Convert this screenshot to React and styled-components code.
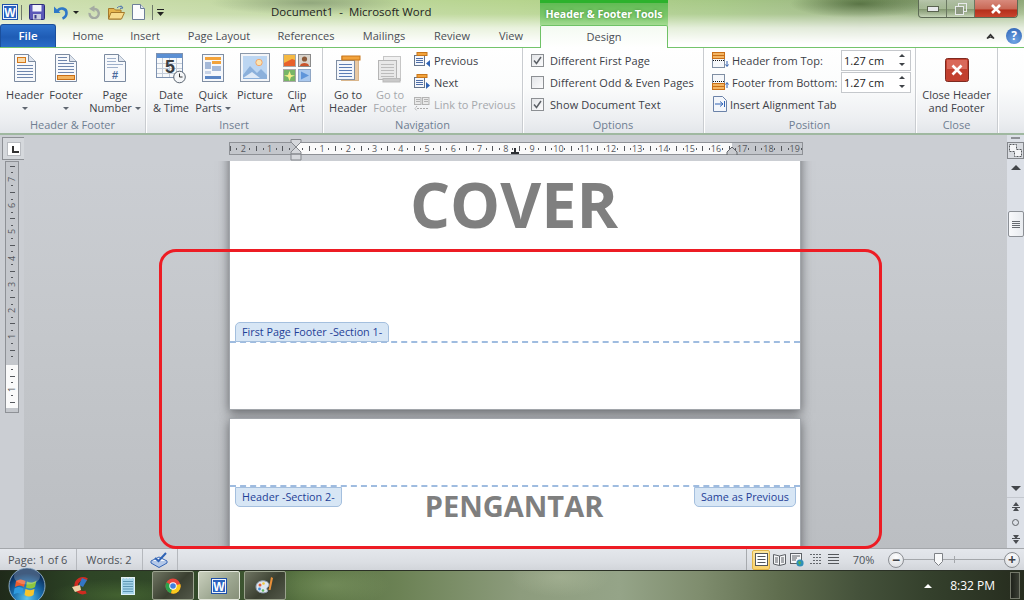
import React from 'react';
import styled, { createGlobalStyle } from 'styled-components';

const UI_FONT = `"Open Sans", "Noto Sans", sans-serif`;

const GlobalStyle = createGlobalStyle`
  html, body { margin: 0; padding: 0; background: #000; }
  * { box-sizing: border-box; }
`;

/* ---------- icons ---------- */

const PageBase = ({ children }) => (
  <svg width="24" height="30" viewBox="0 0 24 30">
    <path d="M1.5 1.5H15.5L22.5 8.5V28.5H1.5Z" fill="#f7f9fc" stroke="#7b8aa0" />
    <path d="M15.5 1.5V8.5H22.5" fill="#dfe5ee" stroke="#7b8aa0" />
    {children}
  </svg>
);

const HeaderIcon = () => (
  <PageBase>
    <rect x="4.5" y="4.5" width="8" height="5" fill="#f8d9a8" stroke="#d5781a" />
    <path d="M4 12.5H20M4 15.5H20M4 18.5H20M4 21.5H20M4 24.5H20" stroke="#6f86ad" />
  </PageBase>
);

const FooterIcon = () => (
  <PageBase>
    <path d="M4 4.5H13M4 7.5H13M4 10.5H20M4 13.5H20M4 16.5H20M4 19.5H20" stroke="#6f86ad" />
    <rect x="3.5" y="22.5" width="17" height="4" fill="#f3b562" stroke="#c96f17" />
  </PageBase>
);

const PageNumberIcon = () => (
  <PageBase>
    <path d="M4 5.5H13M4 8.5H13M4 11.5H20M4 14.5H15" stroke="#9fb0ca" />
    <text x="12" y="26" fontSize="11" fontWeight="700" textAnchor="middle" fill="#4a6a9c" fontFamily="Liberation Sans">#</text>
  </PageBase>
);

const DateTimeIcon = () => (
  <svg width="30" height="31" viewBox="0 0 30 31">
    <rect x="0.5" y="0.5" width="26" height="24" fill="#f7f9fb" stroke="#7e92b0" />
    <rect x="1" y="1" width="25" height="4" fill="#5b8fd3" />
    <path d="M1 10.5H26M1 15.5H26M1 20.5H26M6.5 5V24M13.5 5V24M20.5 5V24" stroke="#c3ccd8" />
    <text x="14" y="20" fontSize="18" fontWeight="700" textAnchor="middle" fill="#3b3f44" fontFamily="Liberation Sans">5</text>
    <circle cx="23.5" cy="24" r="5.8" fill="#f4f6f8" stroke="#59636f" />
    <path d="M23.5 20.5V24H26.5" fill="none" stroke="#333" />
  </svg>
);

const QuickPartsIcon = () => (
  <svg width="24" height="30" viewBox="0 0 24 30">
    <rect x="1.5" y="1.5" width="21" height="27" fill="#f6f8fb" stroke="#7f8ea3" />
    <rect x="4" y="4" width="16" height="3" fill="#f3a33a" />
    <rect x="11" y="8" width="9" height="3" fill="#f3a33a" />
    <rect x="4" y="9" width="6" height="7" fill="#a5b9d8" />
    <rect x="11" y="13" width="9" height="5" fill="#a5b9d8" />
    <rect x="4" y="18" width="6" height="3" fill="#c7d3e6" />
    <rect x="4" y="23" width="16" height="3" fill="#5a85c4" />
  </svg>
);

const PictureIcon = () => (
  <svg width="30" height="30" viewBox="0 0 30 30">
    <rect x="0.5" y="0.5" width="29" height="28" fill="#f3f5f8" stroke="#8b98aa" />
    <rect x="3" y="3" width="24" height="23" fill="#bcd6f2" />
    <circle cx="19" cy="9.5" r="3.2" fill="#fbe3b0" stroke="#f2a66a" />
    <path d="M3 22L10 13L17 20L21 16L27 22V26H3Z" fill="#8bb0db" />
    <path d="M3 25L12 19L20 25Z" fill="#dfeaf7" />
  </svg>
);

const ClipArtIcon = () => (
  <svg width="28" height="28" viewBox="0 0 28 28">
    <rect x="0.5" y="0.5" width="12" height="12" fill="#f5b942" stroke="#a9a9a9" />
    <path d="M1 9L9 5L12 6V12H1Z" fill="#e8622c" />
    <rect x="15.5" y="0.5" width="12" height="12" fill="#d9d4cc" stroke="#8a8a8a" />
    <circle cx="21.5" cy="5" r="2.6" fill="#8c5a3a" />
    <path d="M17 12C17 8 26 8 26 12Z" fill="#c9542c" />
    <rect x="0.5" y="15.5" width="12" height="12" fill="#77b567" stroke="#a9a9a9" />
    <path d="M6.5 17L8 21L12 21.5L8 23L6.5 27L5 23L1 21.5L5 21Z" fill="#f4ef8a" />
    <rect x="15.5" y="15.5" width="12" height="12" fill="#a9c8ee" stroke="#8fa6c4" />
    <path d="M18 17.5L26 21.5L18 25.5Z" fill="#5f95da" />
  </svg>
);

const GoToIcon = ({ $grey, $footer }) => {
  const line = $grey ? '#bcbcbc' : '#5c7db4';
  const fill = $grey ? '#e8e8e8' : '#f3f6fb';
  const edge = $grey ? '#b5b5b5' : '#7f8ea3';
  const orange = $grey ? '#c9c9c9' : '#f2a33c';
  return (
    <svg width="26" height="28" viewBox="0 0 26 28">
      <rect x="6.5" y="1.5" width="17" height="24" fill={$grey ? '#f0f0f0' : '#e9c9a3'} stroke={$grey ? '#c6c6c6' : '#d9b68c'} />
      <rect x="1.5" y="5.5" width="18" height="19" fill={fill} stroke={edge} />
      <path d="M4 9.5H17M4 12.5H17M4 15.5H17M4 18.5H17M4 21.5H17" stroke={line} />
      {$footer ? (
        <rect x="6" y="23.5" width="17" height="3.5" fill={orange} stroke="#b9b9b9" />
      ) : (
        <rect x="7" y="1" width="18" height="4" fill={orange} stroke="#c8761a" />
      )}
    </svg>
  );
};

const NavIcon = ({ $next }) => (
  <svg width="16" height="16" viewBox="0 0 16 16">
    <rect x="0.5" y="3.5" width="10" height="10" fill="#f3f6fb" stroke="#64748c" />
    <path d="M2 6.5H9M2 8.5H9M2 10.5H9" stroke="#4f6fa8" />
    <rect x="3" y="0.5" width="10" height="3" fill="#f2a33c" stroke="#c8761a" />
    {$next ? <path d="M12 8L16 11.5L12 15Z" fill="#2f63b5" /> : <path d="M16 8L12 11.5L16 15Z" fill="#2f63b5" />}
  </svg>
);

const LinkIcon = () => (
  <svg width="16" height="16" viewBox="0 0 16 16">
    <rect x="0.5" y="1.5" width="6.5" height="7" fill="#e9e9e9" stroke="#b3b3b3" />
    <rect x="8.5" y="1.5" width="6.5" height="7" fill="#e9e9e9" stroke="#b3b3b3" />
    <path d="M2 3.5H6M2 5.5H6M10 3.5H14M10 5.5H14" stroke="#b3b3b3" />
    <path d="M3 12.5H14M3 10L1 12.5L3 15" fill="none" stroke="#aaa" strokeDasharray="2 1" />
  </svg>
);

const HeaderTopIcon = () => (
  <svg width="17" height="16" viewBox="0 0 17 16">
    <rect x="0.5" y="0.5" width="12" height="15" fill="#f5f7fa" stroke="#7f8ea3" />
    <rect x="0.5" y="0.5" width="12" height="6" fill="#f3b562" stroke="#c96f17" />
    <path d="M1 3.5H12" stroke="#c96f17" />
    <path d="M1 8.5H12" stroke="#111" strokeDasharray="1 1" />
    <path d="M15 9V14M13.5 12.5L15 14.5L16.5 12.5" fill="none" stroke="#2f5fae" />
  </svg>
);

const FooterBottomIcon = () => (
  <svg width="17" height="16" viewBox="0 0 17 16">
    <rect x="0.5" y="0.5" width="12" height="15" fill="#f5f7fa" stroke="#7f8ea3" />
    <rect x="0.5" y="9.5" width="12" height="6" fill="#f3b562" stroke="#c96f17" />
    <path d="M1 12.5H12" stroke="#c96f17" />
    <path d="M1 7.5H12" stroke="#111" strokeDasharray="1 1" />
    <path d="M15 14V9M13.5 10.5L15 8.5L16.5 10.5" fill="none" stroke="#2f5fae" />
  </svg>
);

const AlignTabIcon = () => (
  <svg width="14" height="16" viewBox="0 0 14 16">
    <path d="M0.5 0.5H9.5L13.5 4.5V15.5H0.5Z" fill="#f3f6fb" stroke="#6b82a8" />
    <path d="M2 8H9M7 5.5L10 8L7 10.5M11.5 5V11" fill="none" stroke="#2f63b5" />
  </svg>
);

const CloseBigIcon = () => (
  <svg width="24" height="24" viewBox="0 0 24 24">
    <rect x="0.5" y="0.5" width="23" height="23" rx="2" fill="#c2402f" stroke="#7e2a20" />
    <rect x="2" y="2" width="20" height="9" fill="#d9695a" />
    <path d="M7.5 7.5L16.5 16.5M16.5 7.5L7.5 16.5" stroke="#fff" strokeWidth="2.6" />
  </svg>
);

const WordLogo = ({ size = 16 }) => (
  <svg width={size} height={size} viewBox="0 0 16 16">
    <rect x="0.5" y="0.5" width="15" height="15" fill="#eef3fb" stroke="#1d4fa8" />
    <rect x="2" y="2" width="12" height="12" fill="#2a62bf" />
    <text x="8" y="12.5" fontSize="12" fontWeight="700" textAnchor="middle" fill="#fff" fontFamily="Liberation Sans">W</text>
  </svg>
);

const SaveIcon = () => (
  <svg width="16" height="16" viewBox="0 0 16 16">
    <rect x="0.5" y="0.5" width="15" height="15" rx="1" fill="#5a58b8" stroke="#2d2c78" />
    <rect x="3.5" y="1" width="9" height="6.5" fill="#f2f4fb" />
    <rect x="4" y="10" width="8" height="5.5" fill="#c9cde0" />
    <rect x="5.5" y="11" width="2" height="3.5" fill="#3a3a8a" />
  </svg>
);

const UndoIcon = () => (
  <svg width="16" height="16" viewBox="0 0 16 16">
    <path d="M4.5 7C7 3 13.5 4 13.5 9C13.5 11.5 12 13.5 9.5 14.5" fill="none" stroke="#2e78c8" strokeWidth="2.6" />
    <path d="M1 2.5V9H7.5Z" fill="#2e78c8" />
  </svg>
);

const RedoIcon = () => (
  <svg width="14" height="14" viewBox="0 0 14 14">
    <path d="M5.5 4.2A4.6 4.6 0 1 1 2.6 8" fill="none" stroke="#a4aaa2" strokeWidth="2.4" />
    <path d="M7.5 0.5V7L2 3.7Z" fill="#a4aaa2" />
  </svg>
);

const OpenIcon = () => (
  <svg width="17" height="15" viewBox="0 0 17 15">
    <path d="M0.5 3.5H6L7.5 5H13V14H0.5Z" fill="#e6b54c" stroke="#a5792b" />
    <path d="M3 7.5H16.5L13.5 14H0.5Z" fill="#f8dc8c" stroke="#a5792b" />
    <path d="M9 3C10.5 1 13 1 14.5 2.5M13 0.5L15 3L12 3.5" fill="none" stroke="#557ab0" />
  </svg>
);

const NewIcon = () => (
  <svg width="13" height="16" viewBox="0 0 13 16">
    <path d="M0.5 0.5H8.5L12.5 4.5V15.5H0.5Z" fill="#fbfcfd" stroke="#6d7f98" />
    <path d="M8.5 0.5V4.5H12.5" fill="#dfe5ee" stroke="#6d7f98" />
  </svg>
);

const CustomizeIcon = () => (
  <svg width="8" height="9" viewBox="0 0 8 9">
    <path d="M0 1.5H7" stroke="#222" />
    <path d="M0 4H7L3.5 8Z" fill="#222" />
  </svg>
);

const ProofIcon = () => (
  <svg width="18" height="16" viewBox="0 0 18 16">
    <path d="M1 9L9 5L17 9L9 14Z" fill="#f6f8fb" stroke="#3565b5" />
    <path d="M1 9V11L9 15.5L17 11V9" fill="#b4c8e8" stroke="#3565b5" />
    <path d="M5 6L8.5 9L16 1" fill="none" stroke="#2f63b5" strokeWidth="2" />
  </svg>
);

const ViewIcon = ({ $kind }) => {
  if ($kind === 'print') {
    return (
      <svg width="13" height="13" viewBox="0 0 13 13">
        <rect x="0.5" y="0.5" width="12" height="12" fill="#fff" stroke="#55585c" />
        <path d="M2.5 3.5H10.5M2.5 6.5H10.5M2.5 9.5H10.5" stroke="#55585c" />
      </svg>
    );
  }
  if ($kind === 'read') {
    return (
      <svg width="13" height="14" viewBox="0 0 13 14">
        <path d="M0.5 1.5L6.5 3L12.5 1.5V11L6.5 12.5L0.5 11Z" fill="#f4f5f7" stroke="#5d6166" />
        <path d="M6.5 3V12.5M2 5H5M2 7H5M2 9H5M8 5H11M8 7H11M8 9H11" stroke="#5d6166" />
      </svg>
    );
  }
  if ($kind === 'web') {
    return (
      <svg width="14" height="14" viewBox="0 0 14 14">
        <rect x="0.5" y="0.5" width="11" height="10" fill="#f4f5f7" stroke="#5d6166" />
        <path d="M2 3H10M2 5H7M2 7H6" stroke="#5d6166" />
        <circle cx="10" cy="10" r="3.6" fill="#2e8fb8" />
        <path d="M8 9L10 8L11 10L9.5 12Z" fill="#58b04a" />
      </svg>
    );
  }
  if ($kind === 'outline') {
    return (
      <svg width="13" height="13" viewBox="0 0 13 13">
        <path d="M1 1.5H12M4 4.5H12M4 7.5H12M1 10.5H12" stroke="#63676c" strokeDasharray="2 1" />
      </svg>
    );
  }
  return (
    <svg width="13" height="13" viewBox="0 0 13 13">
      <path d="M1 1.5H12M1 4.5H12M1 7.5H12M1 10.5H12" stroke="#55585c" />
    </svg>
  );
};

const OrbIcon = () => (
  <svg width="38" height="38" viewBox="0 0 38 38">
    <defs>
      <radialGradient id="orbFill" cx="50%" cy="85%" r="70%">
        <stop offset="0" stopColor="#5fc6ee" />
        <stop offset="0.55" stopColor="#1a6fb0" />
        <stop offset="1" stopColor="#0c2f5c" />
      </radialGradient>
    </defs>
    <circle cx="19" cy="19" r="18" fill="url(#orbFill)" stroke="#a8c4dc" strokeOpacity="0.8" />
    <path d="M8 14C11 12 14 12 17.5 14L16 20C13 18 10 18 7 20Z" fill="#ee5c2c" />
    <path d="M19 14.5C22 16 25 16 28.5 13.5L27 20C24 22 21 22 18 20.5Z" fill="#8cc63f" />
    <path d="M6.5 21.5C10 19.5 12.5 19.5 15.5 21.5L14 27.5C11 25.5 8.5 25.5 5.5 27.5Z" fill="#2f9be0" />
    <path d="M17.5 22C20.5 23.5 23.5 23.5 26.5 22L25.5 28C22.5 30 19.5 30 16.5 28Z" fill="#f8c52c" />
    <ellipse cx="19" cy="9.5" rx="13" ry="8" fill="#fff" opacity="0.22" />
  </svg>
);

const CleanerIcon = () => (
  <svg width="20" height="18" viewBox="0 0 20 18">
    <path d="M16 3C11 0 5 3 5 9C5 14 10 17 15 15" fill="none" stroke="#cf2b20" strokeWidth="3.4" />
    <path d="M11 1L8 8L12 10L16 3Z" fill="#3476c4" />
    <path d="M1 10L9 8L10 13L4 15Z" fill="#eed3a8" />
  </svg>
);

const NotepadIcon = () => (
  <svg width="16" height="20" viewBox="0 0 16 20">
    <rect x="1.5" y="1.5" width="13" height="17" fill="#a5d4ea" stroke="#dff1f8" />
    <path d="M3 5.5H13M3 8H13M3 10.5H13M3 13H13M3 15.5H13" stroke="#5d96b3" />
    <path d="M2 1V3M5 1V3M8 1V3M11 1V3M14 1V3" stroke="#eee" />
  </svg>
);

const ChromeIcon = () => (
  <svg width="16" height="16" viewBox="0 0 16 16">
    <circle cx="8" cy="8" r="7.5" fill="#e8453c" />
    <path d="M8 8L1.5 4.3A7.5 7.5 0 0 0 6 15.3Z" fill="#2ba24c" />
    <path d="M8 8L15.3 6A7.5 7.5 0 0 1 6 15.3Z" fill="#f8c91c" />
    <circle cx="8" cy="8" r="3.7" fill="#fff" />
    <circle cx="8" cy="8" r="2.8" fill="#3f7fe0" />
  </svg>
);

const PaletteIcon = () => (
  <svg width="20" height="20" viewBox="0 0 20 20">
    <path d="M1 11C1 6 6 4 10 5C14 6 15 9 13 11C11 12 12 14 13 15C11 18 1 18 1 11Z" fill="#dfe6ee" stroke="#8fa0b2" />
    <circle cx="5" cy="9" r="1.5" fill="#e25a3a" />
    <circle cx="8.5" cy="7.5" r="1.3" fill="#f2c63a" />
    <circle cx="4.5" cy="13" r="1.4" fill="#3f8fd8" />
    <circle cx="8" cy="14.5" r="1.3" fill="#5fb55a" />
    <path d="M16 1L18 2L15.5 14H13.5Z" fill="#e8903a" />
  </svg>
);

/* ---------- title bar and tabs ---------- */

const Screen = styled.div`
  position: relative;
  display: flex;
  flex-direction: column;
  width: 1024px;
  height: 600px;
  overflow: hidden;
  font-family: ${UI_FONT};
  font-size: 11px;
  color: #3c4046;
`;

const Chrome = styled.div`
  background:
    linear-gradient(180deg, rgba(255, 255, 255, 0) 0, rgba(255, 255, 255, 0.12) 14px, rgba(255, 255, 255, 0.7) 28px, #fff 44px),
    radial-gradient(70px 14px at 860px 4px, #54703f 0, rgba(84, 112, 63, 0) 100%),
    radial-gradient(110px 20px at 960px 0, #6f8a5a 0, rgba(111, 138, 90, 0) 100%),
    radial-gradient(100px 12px at 310px 3px, #8fa57a 0, rgba(143, 165, 122, 0) 100%),
    linear-gradient(90deg, #cfe0b0 0, #c2d8a2 240px, #b6d48e 520px, #a6c886 720px, #9cb583 860px, #a9c191 1024px);
`;

const TitleRow = styled.div`
  display: flex;
  height: 25px;
`;

const Qat = styled.div`
  display: flex;
  align-items: center;
  width: 271px;
  padding: 0 0 1px 2px;
`;

const QatSep = styled.span`
  width: 1px;
  height: 15px;
  margin: 0 ${(p) => p.$right}px 0 ${(p) => p.$left}px;
  background: #6f7a6a;
`;

const QatItem = styled.span`
  display: flex;
  margin-right: ${(p) => p.$gap}px;
`;

const TinyCaret = styled.span`
  width: 0;
  height: 0;
  margin-right: ${(p) => p.$gap || 0}px;
  border-left: 3px solid transparent;
  border-right: 3px solid transparent;
  border-top: 3px solid ${(p) => p.$color || '#222'};
`;

const DocTitle = styled.div`
  width: 269px;
  line-height: 24px;
  font-size: 11.45px;
  color: #1e1e1e;
  white-space: pre;
`;

const ContextTitle = styled.div`
  width: 128px;
  height: 25px;
  border-top: 3px solid #2cb22c;
  background: linear-gradient(180deg, #62bb55 0, #7cc76b 60%, #a4dc92 100%);
  font-size: 10.6px;
  font-weight: 700;
  line-height: 22px;
  text-align: center;
  color: #fff;
  text-shadow: 0 0 3px #3d8a33;
`;

const WindowButtons = styled.div`
  display: flex;
  width: 100px;
  height: 18px;
  margin-left: 250px;
  border: 1px solid #5d6a55;
  border-top: 0;
  border-radius: 0 0 4px 4px;
  overflow: hidden;
`;

const WindowButton = styled.div`
  display: flex;
  align-items: center;
  justify-content: center;
  width: ${(p) => p.$w}px;
  border-right: ${(p) => (p.$close ? 'none' : '1px solid #6b7862')};
  background: ${(p) =>
    p.$close
      ? 'linear-gradient(180deg, #d88a7c 0, #c96a58 50%, #b5301c 60%, #c9452f 100%)'
      : 'linear-gradient(180deg, rgba(255,255,255,.45) 0, rgba(255,255,255,.2) 50%, rgba(90,100,80,.25) 55%, rgba(255,255,255,.25) 100%)'};
`;

const TabRow = styled.div`
  display: flex;
  height: 22px;
`;

const FileTab = styled.div`
  width: 56px;
  height: 23px;
  margin: -1px 4px 0 0;
  border: 1px solid #1b4f9c;
  border-bottom: 0;
  border-radius: 3px 3px 0 0;
  background: linear-gradient(180deg, #2e73cd 0, #1f5cb5 55%, #2a6cc8 100%);
  color: #fff;
  font-size: 11.5px;
  font-weight: 600;
  line-height: 22px;
  text-align: center;
`;

const Tab = styled.div`
  width: ${(p) => p.$w}px;
  font-size: 11px;
  line-height: 22px;
  text-align: center;
  color: #4a4e55;
`;

const DesignTab = styled.div`
  width: 128px;
  height: 23px;
  margin-left: 2px;
  border: 1px solid #6fc266;
  border-bottom: 0;
  border-radius: 2px 2px 0 0;
  background: linear-gradient(180deg, #f4fbf2 0, #fff 100%);
  font-size: 11px;
  line-height: 21px;
  text-align: center;
  color: #4a4e55;
  z-index: 1;
`;

const TabTools = styled.div`
  display: flex;
  align-items: center;
  gap: 11px;
  margin-left: auto;
  padding-right: 2px;
`;

const HelpDot = styled.div`
  width: 16px;
  height: 16px;
  border-radius: 50%;
  background: radial-gradient(circle at 50% 80%, #6fa4e4, #2d62b4);
  color: #fff;
  font-size: 12px;
  font-weight: 700;
  line-height: 16px;
  text-align: center;
`;

/* ---------- ribbon ---------- */

const Ribbon = styled.div`
  display: flex;
  height: 88px;
  border-top: 1px solid #74c46c;
  border-bottom: 2px solid #9fb8a0;
  background: linear-gradient(180deg, #fff 0, #fbfcfc 45%, #eceef1 85%, #e3e6ea 100%);
`;

const Group = styled.section`
  display: flex;
  flex-direction: column;
  width: ${(p) => p.$w}px;
  border-right: 1px solid #c9ccd0;
  box-shadow: 1px 0 0 #fff;
`;

const GroupBody = styled.div`
  flex: 1;
  display: flex;
  gap: ${(p) => p.$gap || 0}px;
  padding: ${(p) => p.$top || 0}px 0 0 ${(p) => p.$left || 0}px;
`;

const GroupLabel = styled.div`
  height: 17px;
  font-size: 11px;
  line-height: 18px;
  text-align: center;
  color: #6f7e92;
`;

const LargeButton = styled.div`
  display: flex;
  flex-direction: column;
  align-items: center;
  width: ${(p) => p.$w}px;
  padding-top: 4px;
  color: ${(p) => (p.$disabled ? '#a5a8ac' : '#3c4046')};
`;

const LargeIcon = styled.div`
  display: flex;
  justify-content: center;
  align-items: flex-start;
  height: 36px;
  padding-top: ${(p) => p.$top || 1}px;
`;

const LargeLabel = styled.div`
  font-size: 11px;
  line-height: 13px;
  text-align: center;
  white-space: nowrap;
`;

const LabelCaret = styled.span`
  display: inline-block;
  width: 0;
  height: 0;
  margin-left: ${(p) => (p.$inline ? 3 : 0)}px;
  vertical-align: 2px;
  border-left: 3px solid transparent;
  border-right: 3px solid transparent;
  border-top: 3px solid #5f6670;
`;

const SmallStack = styled.div`
  display: flex;
  flex-direction: column;
  padding-top: 1px;
`;

const SmallRow = styled.div`
  display: flex;
  align-items: center;
  gap: ${(p) => p.$gap || 4}px;
  height: 22px;
  padding-left: ${(p) => p.$indent || 0}px;
  white-space: nowrap;
  letter-spacing: ${(p) => p.$spacing || 0}px;
  color: ${(p) => (p.$disabled ? '#a5a8ac' : '#3c4046')};
`;

const CheckBox = styled.span`
  display: flex;
  align-items: center;
  justify-content: center;
  width: 13px;
  height: 13px;
  border: 1px solid #8c8f93;
  background: linear-gradient(135deg, #e3e5e8, #fbfbfc);
`;

const PositionLabel = styled.span`
  width: ${(p) => p.$w}px;
`;

const SpinBox = styled.div`
  display: flex;
  align-items: center;
  justify-content: space-between;
  width: 70px;
  height: 21px;
  padding: 0 5px 0 2px;
  border: 1px solid #c5c8cc;
  background: #fff;
  color: #222;
  font-size: 11px;
`;

const SpinArrows = styled.span`
  display: flex;
  flex-direction: column;
  gap: 6px;
`;

const SpinArrow = styled.span`
  width: 0;
  height: 0;
  border-left: 3px solid transparent;
  border-right: 3px solid transparent;
  border-${(p) => (p.$up ? 'bottom' : 'top')}: 3px solid #3e4247;
`;

/* ---------- workspace ---------- */

const Workspace = styled.div`
  flex: 1;
  display: grid;
  grid-template-columns: 24px 983px 17px;
  grid-template-rows: minmax(0, 1fr);
  min-height: 0;
`;

const LeftColumn = styled.div`
  display: flex;
  flex-direction: column;
  align-items: flex-start;
  background: #cbced3;
`;

const TabStopButton = styled.div`
  display: flex;
  align-items: center;
  justify-content: center;
  width: 23px;
  height: 23px;
  margin: 2px 0 1px 2px;
  border: 1px solid #8d9095;
  background: #d5d8dc;
`;

const TabStopInner = styled.div`
  position: relative;
  width: 14px;
  height: 14px;
  border: 1px solid #b8bbc0;
  background: #fff;
  &::after {
    content: '';
    position: absolute;
    left: 4px;
    top: 3px;
    width: 5px;
    height: 5px;
    border-left: 2px solid #333;
    border-bottom: 2px solid #333;
  }
`;

const VerticalRuler = styled.div`
  display: flex;
  flex-direction: column;
  align-items: center;
  width: 14px;
  height: 252px;
  margin-left: 5px;
  padding-top: 1px;
  overflow: hidden;
  border: 1px solid #8e9196;
  background: linear-gradient(180deg, #c4c7cc 0, #c4c7cc 203px, #fafafa 203px, #fafafa 246px, #c4c7cc 246px);
`;

const VMark = styled.div`
  flex: none;
  display: flex;
  align-items: center;
  justify-content: center;
  width: 100%;
  height: 6.5625px;
  color: #55585d;
  font-size: 9px;
`;

const VNumber = styled.span`
  transform: rotate(-90deg);
`;

const VTick = styled.span`
  width: ${(p) => p.$w}px;
  height: 1px;
  background: #55585d;
`;

const CenterColumn = styled.div`
  display: flex;
  flex-direction: column;
  min-width: 0;
  min-height: 0;
  background: #cbced3;
`;

const RulerRow = styled.div`
  flex: none;
  height: 26px;
  padding: 7px 0 0 205px;
`;

const HorizontalRuler = styled.div`
  position: relative;
  width: 574px;
  height: 13px;
  border: 1px solid #8e9196;
  background: linear-gradient(90deg, #c4c7cc 0, #c4c7cc 66px, #fafafa 66px, #fafafa 502px, #c4c7cc 502px);
`;

const HMarks = styled.div`
  display: flex;
  align-items: center;
  height: 100%;
  margin-left: -3px;
  overflow: hidden;
`;

const HMark = styled.div`
  flex: none;
  display: flex;
  align-items: center;
  justify-content: center;
  width: 6.5625px;
  color: #55585d;
  font-size: 9px;
  line-height: 11px;
`;

const HTick = styled.span`
  width: 1px;
  height: ${(p) => p.$h}px;
  background: #55585d;
`;

const IndentMarker = styled.svg`
  position: absolute;
  left: ${(p) => p.$x}px;
  top: ${(p) => p.$y}px;
`;

const DocArea = styled.div`
  flex: 1;
  display: flex;
  flex-direction: column;
  align-items: center;
  gap: 8px;
  min-height: 0;
  padding-right: 1px;
  overflow: hidden;
  background: linear-gradient(180deg, #cbced3 0, #c5c8cc 40%, #bbbec2 100%);
`;

const Page = styled.article`
  flex: none;
  position: relative;
  width: 572px;
  height: ${(p) => p.$h}px;
  margin-top: ${(p) => p.$top || 0}px;
  padding-top: ${(p) => p.$pad || 0}px;
  border: 1px solid #a2a6ab;
  background: #fff;
  box-shadow: 0 3px 10px rgba(50, 52, 56, 0.65);
`;

const Heading = styled.h1`
  margin: 0;
  padding-right: 2px;
  font-family: "Open Sans", sans-serif;
  font-weight: 700;
  font-size: ${(p) => p.$size}px;
  line-height: ${(p) => p.$line}px;
  text-align: center;
  color: #7f7f7f;
`;

const Boundary = styled.div`
  position: relative;
  margin-top: ${(p) => p.$top}px;
  border-top: 2px dashed #9fbce0;
`;

const Badge = styled.span`
  position: absolute;
  ${(p) => (p.$above ? 'bottom: 1px;' : 'top: 0;')}
  ${(p) => (p.$right ? 'right: 4px;' : 'left: 5px;')}
  height: 20px;
  padding: 0 6px;
  border: 1px solid #a4bfde;
  border-radius: ${(p) => (p.$above ? '5px 5px 0 0' : '0 0 5px 5px')};
  background: #d7e6f5;
  color: #1f3f97;
  font-size: 10.8px;
  line-height: 18px;
  white-space: pre;
`;

const ScrollColumn = styled.div`
  display: flex;
  flex-direction: column;
  align-items: center;
  background: #dce0e7;
`;

const Splitter = styled.div`
  width: 9px;
  height: 2px;
  margin-top: 2px;
  background: #8e9196;
`;

const RulerToggle = styled.div`
  display: flex;
  align-items: center;
  justify-content: center;
  width: 17px;
  height: 17px;
  margin-top: 3px;
  border: 1px solid #84878c;
  background: #d8dbe0;
`;

const ScrollArrow = styled.div`
  width: 0;
  height: 0;
  margin-top: ${(p) => p.$mt || 0}px;
  border-left: 5px solid transparent;
  border-right: 5px solid transparent;
  border-${(p) => (p.$up ? 'bottom' : 'top')}: 5px solid #43464a;
`;

const ScrollThumb = styled.div`
  display: flex;
  flex-direction: column;
  align-items: center;
  justify-content: center;
  gap: 1px;
  width: 16px;
  height: 26px;
  margin-top: 41px;
  border: 1px solid #8c9096;
  border-radius: 2px;
  background: linear-gradient(90deg, #f8f9fb, #e8ebef);
`;

const Grip = styled.span`
  width: 8px;
  height: 1px;
  background: #666a70;
`;

const BrowseGroup = styled.div`
  display: flex;
  flex-direction: column;
  align-items: center;
  justify-content: space-around;
  width: 100%;
  height: 51px;
  margin-top: 6px;
  border-top: 1px solid #c4c8cf;
  color: #555;
`;

const BrowseDot = styled.span`
  width: 7px;
  height: 7px;
  border: 1px solid #5f6368;
  border-radius: 50%;
`;

const Annotation = styled.div`
  position: absolute;
  left: 159px;
  top: 249px;
  width: 723px;
  height: 300px;
  border: 3px solid #ed1c24;
  border-radius: 17px;
  pointer-events: none;
`;

/* ---------- status bar ---------- */

const StatusBar = styled.footer`
  display: flex;
  align-items: center;
  height: 22px;
  border-top: 1px solid #a4a7ab;
  background: linear-gradient(180deg, #e4e7ec 0, #dcdfe4 60%, #d2d5da 100%);
  color: #4d5258;
  font-size: 11px;
`;

const StatusCell = styled.div`
  display: flex;
  align-items: center;
  height: 100%;
  padding: 0 ${(p) => p.$pad}px 0 ${(p) => p.$padLeft}px;
  border-right: 1px solid #b5b8bd;
`;

const ViewGroup = styled.div`
  display: flex;
  align-items: center;
  height: 100%;
  margin-left: auto;
  padding-left: 5px;
  border-left: 1px solid #a7aaae;
`;

const ViewButton = styled.div`
  display: flex;
  align-items: center;
  justify-content: center;
  width: 18px;
  height: 20px;
  border-radius: 2px;
  ${(p) =>
    p.$active &&
    `border: 1px solid #e3b64a;
     background: linear-gradient(180deg, #fde7a0, #fbd26a);`}
`;

const ZoomValue = styled.div`
  width: 46px;
  padding-right: 3px;
  text-align: center;
`;

const ZoomBar = styled.div`
  display: flex;
  align-items: center;
  padding: 0 4px 0 0;
`;

const ZoomRound = styled.div`
  flex: none;
  display: flex;
  align-items: center;
  justify-content: center;
  width: 16px;
  height: 16px;
  border: 1px solid #8b8e93;
  border-radius: 50%;
  background: radial-gradient(circle at 50% 30%, #fff, #d5d8dd);
  color: #3e4247;
  font-size: 14px;
  font-weight: 700;
  line-height: 12px;
`;

const ZoomTrack = styled.div`
  position: relative;
  width: 100px;
  height: 1px;
  background: #a4a7ab;
`;

const ZoomTick = styled.span`
  position: absolute;
  left: 50%;
  top: -3px;
  width: 1px;
  height: 7px;
  background: #a4a7ab;
`;

const ZoomThumb = styled.svg`
  position: absolute;
  left: 30px;
  top: -6px;
`;

/* ---------- taskbar ---------- */

const Taskbar = styled.div`
  position: relative;
  display: flex;
  align-items: center;
  height: 30px;
  border-top: 1px solid #2a3025;
  background:
    radial-gradient(60px 22px at 330px 14px, rgba(150, 175, 120, 0.35) 0, rgba(150, 175, 120, 0) 100%),
    radial-gradient(50px 20px at 560px 6px, rgba(190, 200, 170, 0.35) 0, rgba(190, 200, 170, 0) 100%),
    radial-gradient(70px 16px at 120px 24px, rgba(90, 130, 60, 0.45) 0, rgba(90, 130, 60, 0) 100%),
    linear-gradient(90deg, #1f2a1a 0, #2e4526 90px, #334a2a 220px, #55703f 300px, #6c8255 400px, #8d9c7d 520px, #95a488 620px, #7f8d6e 700px, #5f6d4e 780px, #44513a 860px, #34402c 930px, #262c1e 1024px);
`;

const StartOrb = styled.div`
  position: absolute;
  left: 8px;
  top: -4px;
  display: flex;
`;

const PinnedIcon = styled.div`
  display: flex;
  align-items: center;
  justify-content: center;
  width: ${(p) => p.$w}px;
`;

const TaskButton = styled.div`
  display: flex;
  align-items: center;
  justify-content: center;
  width: 42px;
  height: 29px;
  margin-right: 4px;
  border: 1px solid ${(p) => (p.$active ? '#e2e6da' : '#9aa28d')};
  border-radius: 2px;
  background: ${(p) =>
    p.$active
      ? 'linear-gradient(135deg, #c9cfbd 0, #9ea892 55%, #868f78 100%)'
      : 'linear-gradient(135deg, #6f7562 0, #3a3f30 55%, #53584a 100%)'};
`;

const Tray = styled.div`
  display: flex;
  align-items: center;
  margin-left: auto;
  color: #fff;
  font-size: 12px;
`;

const TrayArrow = styled.span`
  width: 0;
  height: 0;
  margin-right: 18px;
  border-left: 4px solid transparent;
  border-right: 4px solid transparent;
  border-bottom: 4px solid #fff;
`;

const ShowDesktop = styled.div`
  width: 10px;
  height: 27px;
  margin: 0 4px 0 15px;
  border: 1px solid #74786a;
  background: linear-gradient(90deg, #1e211a, #3a3e34);
`;

/* ---------- page ---------- */

const hMarks = [];
for (let q = -10; q <= 78; q++) hMarks.push(q);

const vMarks = [];
for (let q = -30; q <= 6; q++) vMarks.push(q);

function renderHMark(q) {
  if (q === 0) return null;
  if (q % 4 === 0) return Math.abs(q / 4);
  if (q % 2 === 0) return <HTick $h={5} />;
  return <HTick $h={2} />;
}

function renderVMark(q) {
  if (q === 0) return null;
  if (q % 4 === 0) return <VNumber>{Math.abs(q / 4)}</VNumber>;
  if (q % 2 === 0) return <VTick $w={5} />;
  return <VTick $w={2} />;
}

const Checked = () => (
  <svg width="9" height="9" viewBox="0 0 9 9">
    <path d="M1 4.5L3.5 7.5L8 1" fill="none" stroke="#5c6066" strokeWidth="1.5" />
  </svg>
);

function App() {
  return (
    <Screen>
      <GlobalStyle />
      <Chrome>
        <TitleRow>
          <Qat>
            <QatItem $gap={0}><WordLogo /></QatItem>
            <QatSep $left={3} $right={7} />
            <QatItem $gap={8}><SaveIcon /></QatItem>
            <QatItem $gap={4}><UndoIcon /></QatItem>
            <TinyCaret $gap={8} />
            <QatItem $gap={7}><RedoIcon /></QatItem>
            <QatItem $gap={7}><OpenIcon /></QatItem>
            <QatItem $gap={0}><NewIcon /></QatItem>
            <QatSep $left={7} $right={4} />
            <QatItem $gap={0}><CustomizeIcon /></QatItem>
          </Qat>
          <DocTitle>Document1  -  Microsoft Word</DocTitle>
          <ContextTitle>Header &amp; Footer Tools</ContextTitle>
          <WindowButtons>
            <WindowButton $w={28}>
              <svg width="12" height="6" viewBox="0 0 12 6"><rect x="0.5" y="0.5" width="11" height="5" fill="#e7e9ea" stroke="#59624f" /></svg>
            </WindowButton>
            <WindowButton $w={28}>
              <svg width="12" height="12" viewBox="0 0 12 12">
                <rect x="3.5" y="0.5" width="8" height="8" fill="none" stroke="#e7e9ea" />
                <rect x="0.5" y="3.5" width="8" height="8" fill="#8e9a82" stroke="#e7e9ea" />
              </svg>
            </WindowButton>
            <WindowButton $w={42} $close>
              <svg width="12" height="10" viewBox="0 0 12 10"><path d="M2 1L10 9M10 1L2 9" stroke="#fff" strokeWidth="2.6" /></svg>
            </WindowButton>
          </WindowButtons>
        </TitleRow>
        <TabRow>
          <FileTab>File</FileTab>
          <Tab $w={56}>Home</Tab>
          <Tab $w={58}>Insert</Tab>
          <Tab $w={90}>Page Layout</Tab>
          <Tab $w={84}>References</Tab>
          <Tab $w={72}>Mailings</Tab>
          <Tab $w={64}>Review</Tab>
          <Tab $w={54}>View</Tab>
          <DesignTab>Design</DesignTab>
          <TabTools>
            <svg width="9" height="7" viewBox="0 0 9 7"><path d="M1 5.5L4.5 1.5L8 5.5L4.5 4Z" fill="none" stroke="#333" strokeWidth="1.3" /></svg>
            <HelpDot>?</HelpDot>
          </TabTools>
        </TabRow>
      </Chrome>

      <Ribbon>
        <Group $w={146}>
          <GroupBody $left={5}>
            <LargeButton $w={40}>
              <LargeIcon><HeaderIcon /></LargeIcon>
              <LargeLabel>Header<br /><LabelCaret /></LargeLabel>
            </LargeButton>
            <LargeButton $w={42}>
              <LargeIcon><FooterIcon /></LargeIcon>
              <LargeLabel>Footer<br /><LabelCaret /></LargeLabel>
            </LargeButton>
            <LargeButton $w={56}>
              <LargeIcon><PageNumberIcon /></LargeIcon>
              <LargeLabel>Page<br />Number<LabelCaret $inline /></LargeLabel>
            </LargeButton>
          </GroupBody>
          <GroupLabel>Header &amp; Footer</GroupLabel>
        </Group>

        <Group $w={177}>
          <GroupBody $left={2}>
            <LargeButton $w={46}>
              <LargeIcon $top={1}><DateTimeIcon /></LargeIcon>
              <LargeLabel>Date<br />&amp; Time</LargeLabel>
            </LargeButton>
            <LargeButton $w={38}>
              <LargeIcon><QuickPartsIcon /></LargeIcon>
              <LargeLabel>Quick<br />Parts<LabelCaret $inline /></LargeLabel>
            </LargeButton>
            <LargeButton $w={46}>
              <LargeIcon><PictureIcon /></LargeIcon>
              <LargeLabel>Picture</LargeLabel>
            </LargeButton>
            <LargeButton $w={38}>
              <LargeIcon $top={2}><ClipArtIcon /></LargeIcon>
              <LargeLabel>Clip<br />Art</LargeLabel>
            </LargeButton>
          </GroupBody>
          <GroupLabel>Insert</GroupLabel>
        </Group>

        <Group $w={200}>
          <GroupBody $left={4}>
            <LargeButton $w={42}>
              <LargeIcon $top={3}><GoToIcon /></LargeIcon>
              <LargeLabel>Go to<br />Header</LargeLabel>
            </LargeButton>
            <LargeButton $w={42} $disabled>
              <LargeIcon $top={3}><GoToIcon $grey $footer /></LargeIcon>
              <LargeLabel>Go to<br />Footer</LargeLabel>
            </LargeButton>
            <SmallStack>
              <SmallRow $indent={3}><NavIcon />Previous</SmallRow>
              <SmallRow $indent={3}><NavIcon $next />Next</SmallRow>
              <SmallRow $indent={3} $disabled><LinkIcon />Link to Previous</SmallRow>
            </SmallStack>
          </GroupBody>
          <GroupLabel>Navigation</GroupLabel>
        </Group>

        <Group $w={181}>
          <GroupBody $left={8}>
            <SmallStack>
              <SmallRow $gap={6} $spacing={0.08}><CheckBox><Checked /></CheckBox>Different First Page</SmallRow>
              <SmallRow $gap={6} $spacing={0.08}><CheckBox />Different Odd &amp; Even Pages</SmallRow>
              <SmallRow $gap={6} $spacing={0.08}><CheckBox><Checked /></CheckBox>Show Document Text</SmallRow>
            </SmallStack>
          </GroupBody>
          <GroupLabel>Options</GroupLabel>
        </Group>

        <Group $w={212}>
          <GroupBody $left={8}>
            <SmallStack>
              <SmallRow $gap={3}>
                <HeaderTopIcon />
                <PositionLabel $w={106}>Header from Top:</PositionLabel>
                <SpinBox>1.27 cm<SpinArrows><SpinArrow $up /><SpinArrow /></SpinArrows></SpinBox>
              </SmallRow>
              <SmallRow $gap={3}>
                <FooterBottomIcon />
                <PositionLabel $w={106}>Footer from Bottom:</PositionLabel>
                <SpinBox>1.27 cm<SpinArrows><SpinArrow $up /><SpinArrow /></SpinArrows></SpinBox>
              </SmallRow>
              <SmallRow $indent={1} $gap={3}><AlignTabIcon />Insert Alignment Tab</SmallRow>
            </SmallStack>
          </GroupBody>
          <GroupLabel>Position</GroupLabel>
        </Group>

        <Group $w={82}>
          <GroupBody>
            <LargeButton $w={81}>
              <LargeIcon $top={6}><CloseBigIcon /></LargeIcon>
              <LargeLabel>Close Header<br />and Footer</LargeLabel>
            </LargeButton>
          </GroupBody>
          <GroupLabel>Close</GroupLabel>
        </Group>
      </Ribbon>

      <Workspace>
        <LeftColumn>
          <TabStopButton><TabStopInner /></TabStopButton>
          <VerticalRuler>
            {vMarks.map((q) => <VMark key={q}>{renderVMark(q)}</VMark>)}
          </VerticalRuler>
        </LeftColumn>

        <CenterColumn>
          <RulerRow>
            <HorizontalRuler>
              <HMarks>
                {hMarks.map((q) => <HMark key={q}>{renderHMark(q)}</HMark>)}
              </HMarks>
              <IndentMarker $x={60} $y={-4} width="12" height="22" viewBox="0 0 12 22">
                <path d="M1 0.5H11V3L6 8L1 3ZM6 8L11 13V15H1V13ZM1 15H11V21H1Z" fill="#d6d8dc" stroke="#85888d" />
              </IndentMarker>
              <IndentMarker $x={496} $y={0} width="12" height="12" viewBox="0 0 12 12">
                <path d="M6 4L11 9V12H1V9Z" fill="#c9cbcf" stroke="#63666b" />
              </IndentMarker>
              <IndentMarker $x={281} $y={5} width="8" height="6" viewBox="0 0 8 6">
                <path d="M3 0H5V4H8V6H0V4H3Z" fill="#2b2e32" />
              </IndentMarker>
            </HorizontalRuler>
          </RulerRow>
          <DocArea>
            <Page $top={-20} $h={269} $pad={19}>
              <Heading $size={63} $line={85}>COVER</Heading>
              <Boundary $top={95}>
                <Badge $above>First Page Footer -Section 1-</Badge>
              </Boundary>
            </Page>
            <Page $h={140} $pad={66}>
              <Boundary $top={0}>
                <Badge>Header -Section 2-</Badge>
                <Badge $right>Same as Previous</Badge>
              </Boundary>
              <Heading $size={29} $line={38}>PENGANTAR</Heading>
            </Page>
          </DocArea>
        </CenterColumn>

        <ScrollColumn>
          <Splitter />
          <RulerToggle>
            <svg width="13" height="13" viewBox="0 0 13 13">
              <path d="M0.5 0.5H7.5V5.5H12.5V12.5H5.5V7.5H0.5Z" fill="#f4f5f7" stroke="#55585c" strokeDasharray="2 1" />
            </svg>
          </RulerToggle>
          <ScrollArrow $up $mt={6} />
          <ScrollThumb><Grip /><Grip /><Grip /><Grip /></ScrollThumb>
          <ScrollArrow $mt={249} />
          <BrowseGroup>
            <svg width="8" height="9" viewBox="0 0 8 9"><path d="M4 0L7 4H1ZM0 5H8V6H0ZM4 5L7 9H1Z" fill="#4a4d52" /></svg>
            <BrowseDot />
            <svg width="8" height="9" viewBox="0 0 8 9"><path d="M1 0H7L4 4ZM0 3H8V4H0ZM1 5H7L4 9Z" fill="#4a4d52" /></svg>
          </BrowseGroup>
        </ScrollColumn>
      </Workspace>

      <StatusBar>
        <StatusCell $padLeft={8} $pad={9}>Page: 1 of 6</StatusCell>
        <StatusCell $padLeft={9} $pad={10}>Words: 2</StatusCell>
        <StatusCell $padLeft={7} $pad={9}><ProofIcon /></StatusCell>
        <ViewGroup>
          <ViewButton $active><ViewIcon $kind="print" /></ViewButton>
          <ViewButton><ViewIcon $kind="read" /></ViewButton>
          <ViewButton><ViewIcon $kind="web" /></ViewButton>
          <ViewButton><ViewIcon $kind="outline" /></ViewButton>
          <ViewButton><ViewIcon $kind="draft" /></ViewButton>
        </ViewGroup>
        <ZoomValue>70%</ZoomValue>
        <ZoomBar>
          <ZoomRound>−</ZoomRound>
          <ZoomTrack>
            <ZoomTick />
            <ZoomThumb width="9" height="13" viewBox="0 0 9 13">
              <path d="M0.5 0.5H8.5V8.5L4.5 12.5L0.5 8.5Z" fill="#f8f9fa" stroke="#7e8186" />
            </ZoomThumb>
          </ZoomTrack>
          <ZoomRound>+</ZoomRound>
        </ZoomBar>
      </StatusBar>

      <Taskbar>
        <StartOrb><OrbIcon /></StartOrb>
        <PinnedIcon $w={58} />
        <PinnedIcon $w={46}><CleanerIcon /></PinnedIcon>
        <PinnedIcon $w={48}><NotepadIcon /></PinnedIcon>
        <TaskButton><ChromeIcon /></TaskButton>
        <TaskButton $active><WordLogo /></TaskButton>
        <TaskButton><PaletteIcon /></TaskButton>
        <Tray>
          <TrayArrow />
          8:32 PM
          <ShowDesktop />
        </Tray>
      </Taskbar>

      <Annotation />
    </Screen>
  );
}

export default App;
